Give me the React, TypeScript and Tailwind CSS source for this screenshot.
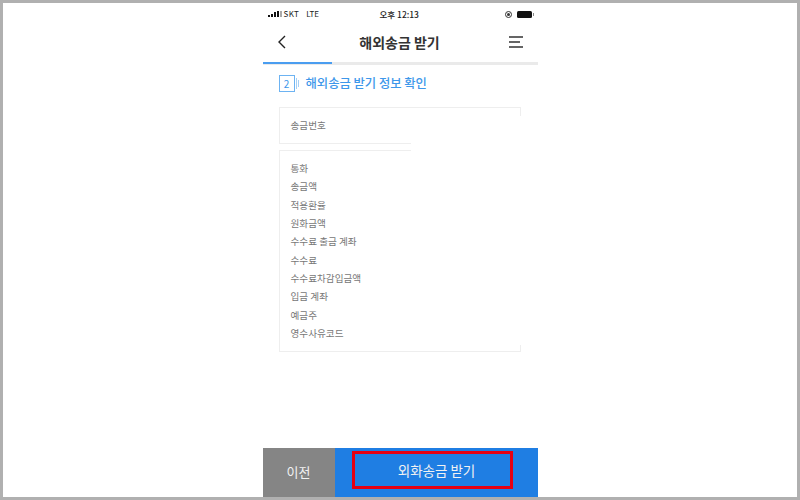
const ROWS = [
  "통화",
  "송금액",
  "적용환율",
  "원화금액",
  "수수료 출금 계좌",
  "수수료",
  "수수료차감입금액",
  "입금 계좌",
  "예금주",
  "영수사유코드",
];

const FONT = "font-['Noto_Sans_CJK_KR','Noto_Sans',sans-serif]";

function StatusBar() {
  return (
    <div className="relative flex h-[22px] shrink-0 items-center px-[5px] text-[8px] text-[#222]">
      <div className="flex items-end gap-[1px]">
        <span className="h-[2px] w-[2px] bg-[#111]" />
        <span className="h-[3px] w-[2px] bg-[#111]" />
        <span className="h-[5px] w-[2px] bg-[#111]" />
        <span className="h-[6px] w-[2px] bg-[#111]" />
        <span className="h-[6px] w-[2px] bg-[#aaa]" />
      </div>
      <span className="ml-[2px] tracking-[0.4px]">SKT</span>
      <span className="ml-[7px]">LTE</span>
      <span className="absolute left-[117px] top-[5px] text-[8.5px] font-medium">오후 12:13</span>
      <div className="ml-auto mr-[-1px] flex items-center gap-[5px]">
        <span className="flex h-[7px] w-[7px] items-center justify-center rounded-full border border-[#333]">
          <span className="h-[3px] w-[3px] rounded-full bg-[#333]" />
        </span>
        <span className="flex items-center">
          <span className="h-[7px] w-[15px] rounded-[1.5px] bg-[#111]" />
          <span className="ml-[1px] h-[3px] w-[1px] bg-[#888]" />
        </span>
      </div>
    </div>
  );
}

function Header() {
  return (
    <div className="flex h-[37px] shrink-0 items-center justify-between pb-[3px] pl-[13px] pr-[15px]">
      <svg width="12" height="16" viewBox="0 0 12 16" fill="none" stroke="#222" strokeWidth="1.4">
        <path d="M9 2 L3 8 L9 14" />
      </svg>
      <span className="ml-[4px] text-[14px] font-semibold text-[#333]">해외송금 받기</span>
      <svg width="15" height="12" viewBox="0 0 15 12" fill="none" stroke="#111" strokeWidth="1.3">
        <path d="M1 1 H15" />
        <path d="M1 6 H12" />
        <path d="M1 11 H15" />
      </svg>
    </div>
  );
}

export default function App() {
  return (
    <div className={`flex h-[500px] w-[800px] justify-center overflow-hidden border-[3px] border-[#b0b0b0] bg-white ${FONT}`}>
      <div className="flex w-[275px] flex-col">
        <StatusBar />
        <Header />
        <div className="h-[3px] shrink-0 bg-[#eaeaea]">
          <div className="h-[2px] w-[69px] bg-[#4a9df0]" />
        </div>
        <div className="flex flex-1 flex-col pl-[16px] pr-[17px]">
          <div className="mt-[9px] flex h-[18px] items-center">
            <span className="flex h-[17px] w-[16px] items-center justify-center border border-[#6db3f2] text-[10px] text-[#3d97ea]">
              2
            </span>
            <span className="ml-[1px] h-[11px] w-[1px] bg-[#a5d0f6]" />
            <span className="ml-[1px] h-[7px] w-[1px] bg-[#a5d0f6]" />
            <span className="ml-[7px] text-[12.3px] font-medium text-[#3d97ea]">해외송금 받기 정보 확인</span>
          </div>
          <div className="relative mt-[15px]">
            <div className="flex h-[37px] items-center border border-[#eeeeee] pl-[11px] text-[9.6px] text-[#777]">
              송금번호
            </div>
            <div className="mt-[6px] flex h-[202px] flex-col border border-[#eeeeee] pl-[11px] pt-[8px]">
              {ROWS.map((row) => (
                <div key={row} className="flex h-[18.35px] items-center text-[9.6px] text-[#777]">
                  {row}
                </div>
              ))}
            </div>
            {/* values are blanked out in the picture */}
            <div className="absolute left-[132px] right-[-1px] top-[9px] h-[229px] bg-white" />
          </div>
        </div>
        <div className="flex h-[49px] shrink-0 text-[#f2f2f2]">
          <div className="flex w-[72px] items-center justify-center bg-[#858585] pb-[1px] text-[13px]">이전</div>
          <div className="flex flex-1 items-start bg-[#1f7ee3] pl-[17px] pt-[3px]">
            <div className="flex h-[38px] w-[161px] items-center justify-center border-[3px] border-[#e60012] pl-[9px] pt-[1px] text-[13.5px]">
              외화송금 받기
            </div>
          </div>
        </div>
      </div>
    </div>
  );
}
